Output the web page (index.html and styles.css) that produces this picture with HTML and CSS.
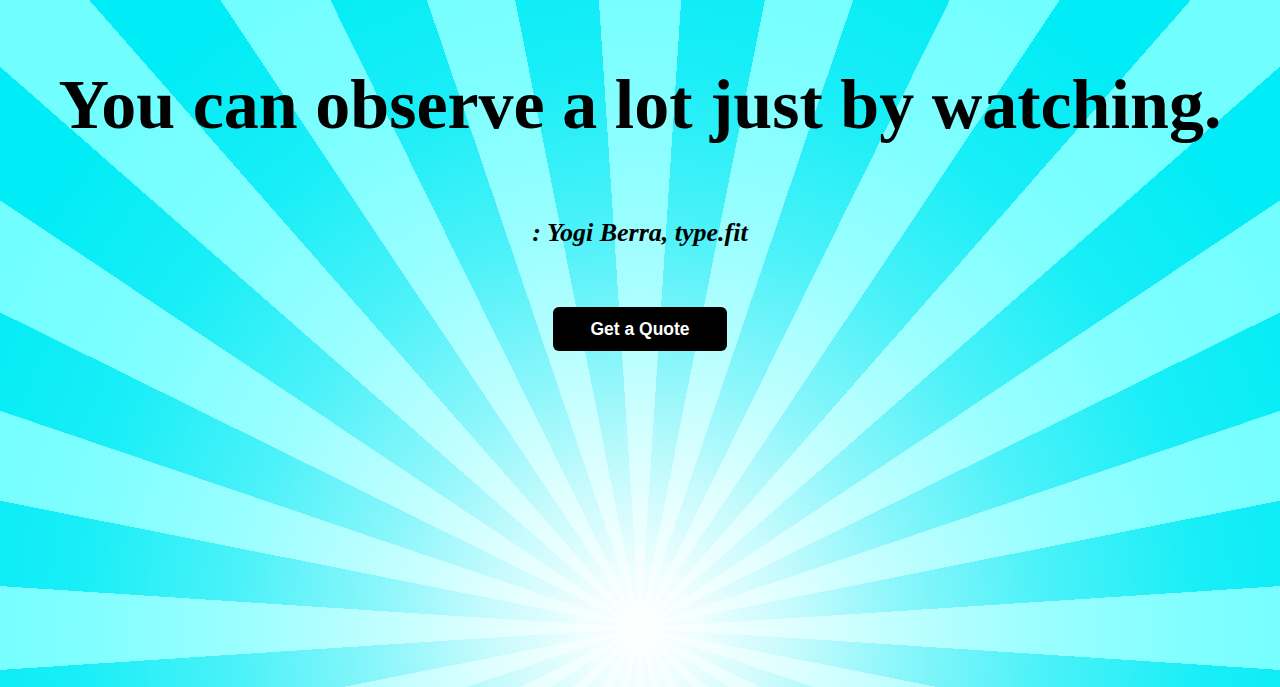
FILE: index.html
```html
<!DOCTYPE html>
<html lang="en">
<head>
<meta charset="utf-8">
<title>Quote</title>
<link rel="stylesheet" href="styles.css">
</head>
<body>
<main class="page">
  <h1 class="quote">You can observe a lot just by watching.</h1>
  <p class="author">: Yogi Berra, type.fit</p>
  <button class="btn" type="button">Get a Quote</button>
</main>
</body>
</html>
```

FILE: styles.css
```css
html, body {
  margin: 0;
  height: 100%;
}
body {
  background-color: #00ecf6;
  background-image:
    radial-gradient(circle at 640px 628px,
      #ffffff 0,
      rgba(255,255,255,0.95) 50px,
      rgba(255,255,255,0.78) 150px,
      rgba(255,255,255,0.55) 260px,
      rgba(255,255,255,0.3) 400px,
      rgba(255,255,255,0.1) 560px,
      rgba(255,255,255,0) 740px),
    repeating-conic-gradient(from -3.75deg at 640px 628px,
      #70feff 0deg 7.5deg,
      #00ecf6 7.5deg 15deg);
  font-family: "Liberation Serif", "Times New Roman", serif;
  color: #000;
  overflow: hidden;
}
.page {
  display: flex;
  flex-direction: column;
  align-items: center;
  text-align: center;
  padding-top: 63px;
}
.quote {
  margin: 0;
  font-size: 70px;
  font-weight: bold;
  line-height: 1.2;
}
.author {
  margin: 70px 0 0;
  font-size: 26px;
  font-weight: bold;
  font-style: italic;
  line-height: 1.2;
}
.btn {
  margin-top: 59px;
  width: 174px;
  height: 44px;
  border: 0;
  border-radius: 6px;
  background: #000;
  color: #fff;
  font-family: "Liberation Sans", Arial, sans-serif;
  font-weight: bold;
  font-size: 17.5px;
  cursor: pointer;
}
```
